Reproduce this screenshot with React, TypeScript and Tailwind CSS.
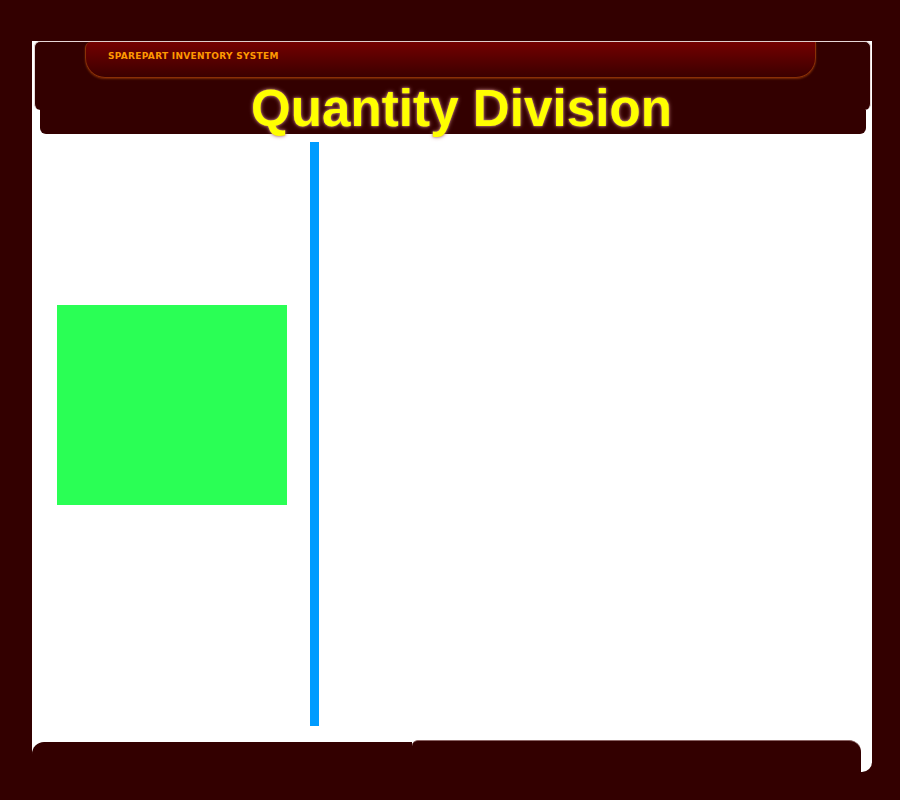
import React from 'react';

const DARK = 'bg-[#330000]';

function Header() {
  return (
    <div>
      {/* Top box with the red pill and the title */}
      <div className={`ml-[2px] mr-[1px] h-[69px] rounded-[6px] border border-b-0 border-[#e6d6d6] ${DARK}`}>
        <div className="ml-[50px] w-[731px] h-[36px] rounded-b-[20px] rounded-tl-[6px] bg-gradient-to-b from-[#740000] to-[#3c0000] border border-t-0 border-[#8a3006] pl-[22px] pt-[8px] shadow-[0_1px_2px_#7a2a06]">
          <span className="block font-['DejaVu_Sans',sans-serif] font-bold text-[9px] leading-[12px] tracking-[0.3px] text-[#ff9900]">
            SPAREPART INVENTORY SYSTEM
          </span>
        </div>
        <h1 className="mt-[5px] pl-[18px] text-center font-['Liberation_Sans',Arial,sans-serif] font-bold text-[51px] leading-none tracking-[0.1px] text-[#ffff00] [text-shadow:0_0_4px_#b07070,0_0_2px_#c08a8a]">
          Quantity Division
        </h1>
      </div>
      {/* Lower strip under the title */}
      <div className={`ml-[8px] w-[826px] h-[24px] rounded-b-[6px] ${DARK}`} />
    </div>
  );
}

function Footer() {
  return (
    <div className="flex items-end h-[32px]">
      <div className={`w-[380px] h-[30px] rounded-tl-[12px] ${DARK}`} />
      <div className={`w-[449px] h-[32px] rounded-tl-[6px] rounded-tr-[12px] border-t border-[#8c6464] ${DARK}`} />
    </div>
  );
}

export default function App() {
  return (
    <div className={`min-h-[800px] overflow-hidden pt-[41px] ${DARK}`}>
      <div className="ml-[32px] w-[840px] bg-white rounded-br-[10px]">
        <Header />

        {/* Body */}
        <div className="flex pt-[8px] pb-[14px]">
          <div className="w-[278px]">
            <div className="mt-[163px] ml-[25px] w-[230px] h-[200px] bg-[#2aff55]" />
          </div>
          <div className="w-[9px] h-[584px] bg-[#009cff]" />
          <div className="flex-1" />
        </div>

        <Footer />
      </div>
    </div>
  );
}
